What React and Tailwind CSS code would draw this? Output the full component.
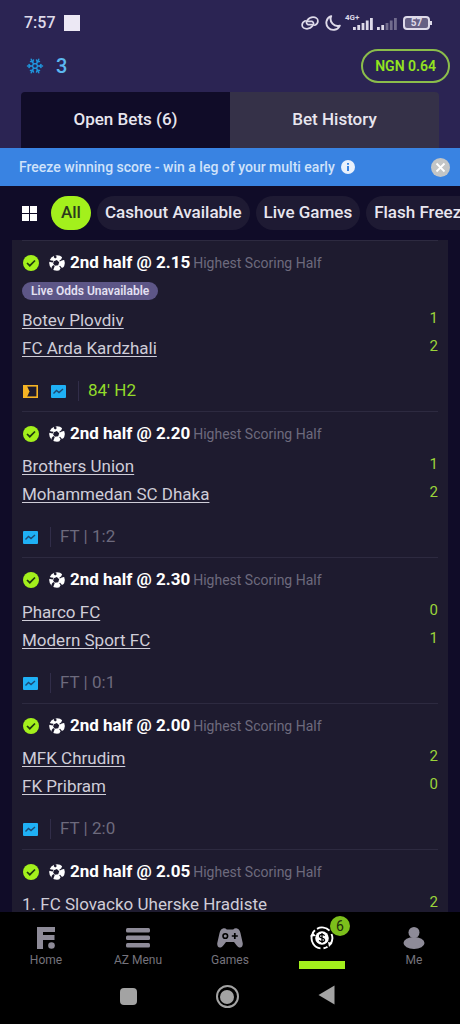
import { Snowflake } from 'lucide-react';

const FILTERS = ['All', 'Cashout Available', 'Live Games', 'Flash Freeze'];

const BETS = [
  { odds: '2.15', teams: ['Botev Plovdiv', 'FC Arda Kardzhali'], score: [1, 2], live: true, status: "84' H2" },
  { odds: '2.20', teams: ['Brothers Union', 'Mohammedan SC Dhaka'], score: [1, 2], status: 'FT | 1:2' },
  { odds: '2.30', teams: ['Pharco FC', 'Modern Sport FC'], score: [0, 1], status: 'FT | 0:1' },
  { odds: '2.00', teams: ['MFK Chrudim', 'FK Pribram'], score: [2, 0], status: 'FT | 2:0' },
  { odds: '2.05', teams: ['1. FC Slovacko Uherske Hradiste'], score: [2] },
];

function LinkIcon() {
  return (
    <svg width="18" height="14" viewBox="0 0 18 14" fill="none" stroke="currentColor" strokeWidth="1.7" strokeLinecap="round">
      <path d="M11.500 8.600H6.800a2.600 2.600 0 0 1-.6-4.200C7.600 2.400 9.500 1.200 12 1.200c2.600 0 4.900 1.400 4.900 3.700 0 2-1.300 3.500-3.200 4.300" />
      <path d="M6.500 5.400h4.700a2.600 2.600 0 0 1 .6 4.200C10.400 11.600 8.500 12.800 6 12.800c-2.600 0-4.900-1.400-4.900-3.700 0-2 1.300-3.500 3.200-4.300" />
    </svg>
  );
}

function MoonIcon() {
  return (
    <svg width="16" height="16" viewBox="0 0 16 16" fill="none" stroke="currentColor" strokeWidth="1.9" strokeLinejoin="round">
      <path d="M6.200 1.200a7 7 0 1 0 8.600 9.400A7 7 0 0 1 6.200 1.200z" />
    </svg>
  );
}

function Signal({ dim }) {
  return (
    <svg width="20" height="12" viewBox="0 0 20 12" fill="currentColor">
      <rect x="0" y="9" width="2.800" height="3" />
      <rect x="4.300" y="7" width="2.800" height="5" />
      <rect x="8.600" y="5" width="2.800" height="7" opacity={dim ? 0.4 : 1} />
      <rect x="12.800" y="2.500" width="2.800" height="9.500" opacity={dim ? 0.4 : 1} />
      <rect x="17" y="0" width="2.800" height="12" opacity={dim ? 0.4 : 1} />
    </svg>
  );
}

function CheckBadge() {
  return (
    <svg width="16" height="16" viewBox="0 0 16 16" className="shrink-0">
      <circle cx="8" cy="8" r="8" fill="#a3f01c" />
      <path d="M4 8l2.800 2.700 5.200-5.200" fill="none" stroke="#1e3a10" strokeWidth="1.700" />
    </svg>
  );
}

function Ball() {
  return (
    <svg width="16" height="16" viewBox="0 0 16 16" className="shrink-0">
      <circle cx="8" cy="8" r="7.800" fill="#fff" />
      <g fill="#1e1b2f">
        <path d="M4.800 6.200l3-1.200 2.400 2.200-1 3.100-3.400.4-1.700-2.200z" />
        <path d="M5 0l2.200.4.400 2.200-1.400 1L4.800 2.200z" />
        <path d="M0 4.800l2.300.8 2.200.2-.8 1.600L0 6.800z" />
        <path d="M2 15l.8-3.200 1.500-1.700 1.400 1.100-.9 2.200L4 15.500z" />
        <path d="M10 15.800l1.600-2.600-1.400-2 .9-.4 1.700 1.900 2.700-.3-1.500 2.800z" />
        <path d="M16 4.800l-3.200.6-2 1.200-.5-.8 2-1.600L13.500 1z" />
      </g>
    </svg>
  );
}

function StreamIcon() {
  return (
    <svg width="15" height="13" viewBox="0 0 15 13">
      <rect x="0.800" y="0.800" width="13.400" height="11.400" fill="none" stroke="#f5b324" strokeWidth="1.600" />
      <path d="M1 1h3l2.500 5.500L4 12H1z" fill="#f5b324" />
    </svg>
  );
}

function StatsIcon() {
  return (
    <svg width="15" height="13" viewBox="0 0 15 13">
      <rect width="15" height="13" rx="1" fill="#1fb0f5" />
      <path d="M2.500 8.500l3-3 2.500 2 4-3.500" fill="none" stroke="#1d4a73" strokeWidth="1.400" />
    </svg>
  );
}

function HomeLogo() {
  return (
    <svg width="18" height="22" viewBox="0 0 18 22" fill="currentColor">
      <path d="M0 0h18v5H6v3h11.500v5H6v9H0z" />
      <circle cx="14.500" cy="18.500" r="3.300" />
    </svg>
  );
}

function MenuIcon() {
  return (
    <svg width="24" height="20" viewBox="0 0 24 20" fill="currentColor">
      <rect width="24" height="4.500" rx="1.500" />
      <rect y="7.500" width="24" height="4.500" rx="1.500" />
      <rect y="15" width="24" height="4.500" rx="1.500" />
    </svg>
  );
}

function GamepadIcon() {
  return (
    <svg width="26" height="20" viewBox="0 0 26 20">
      <path
        d="M6 .5c1.500-.5 2.800 0 3.800 1h6.400c1-1 2.300-1.500 3.800-1 1.800.5 2.800 2 3.400 4.300L25.700 15c.4 2.500-.6 4.500-2.500 4.500-1.500 0-2.500-.8-3.700-2.300L17 14H9l-2.500 3.200C5.300 18.700 4.300 19.500 2.800 19.500.9 19.500-.1 17.500.3 15L2.600 4.800C3.200 2.500 4.200 1 6 .5z"
        fill="currentColor"
      />
      <circle cx="8.300" cy="8" r="2.300" fill="none" stroke="#000" strokeWidth="1.600" />
      <path d="M17.800 5v6M14.800 8h6" stroke="#000" strokeWidth="1.700" />
    </svg>
  );
}

function BetsIcon() {
  return (
    <svg width="24" height="24" viewBox="0 0 24 24" fill="none" stroke="#fff" strokeWidth="1.900">
      <path d="M10.500 22.400A10.500 10.500 0 0 1 2 9M7 2.800A10.500 10.500 0 0 1 19.500 4.700M21.500 8A10.500 10.500 0 0 1 20 18.700" />
      <path d="M0 10.500L2.500 6l3.500 4zM18 16l4.500 1-3.500 4z" fill="#fff" stroke="none" />
      <path d="M13.500 22.300a10.500 10.500 0 0 0 4-1.600M2.600 7.200A10.500 10.500 0 0 1 5 4.200" />
      <circle cx="12" cy="12" r="6.800" fill="#fff" stroke="none" />
      <path d="M14.600 9.800c-.4-.9-1.300-1.400-2.600-1.400-1.500 0-2.500.7-2.500 1.800 0 2.600 5.100 1.100 5.100 3.700 0 1.100-1.100 1.700-2.600 1.700-1.400 0-2.400-.5-2.700-1.500M12 7v10" stroke="#000" strokeWidth="1.300" />
    </svg>
  );
}

function MeIcon() {
  return (
    <svg width="22" height="22" viewBox="0 0 22 22" fill="currentColor">
      <circle cx="11" cy="5.500" r="5.500" />
      <ellipse cx="11" cy="16" rx="10.500" ry="6" />
    </svg>
  );
}

function Team({ name, score }) {
  return (
    <div className="flex h-7 items-start justify-between">
      <a href="#" className="text-[17px] leading-7 text-[#cfcdd8] underline underline-offset-2">
        {name}
      </a>
      <span className="text-[15px] leading-6 text-[#9bd43a]">{score}</span>
    </div>
  );
}

function Bet({ bet }) {
  return (
    <article className="border-t border-[#2d2a40] pt-2.5 pb-2">
      <div className="flex h-6 items-center whitespace-nowrap">
        <span className="pl-px">
          <CheckBadge />
        </span>
        <span className="ml-2.5">
          <Ball />
        </span>
        <h2 className="ml-[5px] text-[17px] font-bold text-white">2nd half @ {bet.odds}</h2>
        <span className="ml-[3px] text-sm text-[#6d6a7d]">Highest Scoring Half</span>
      </div>
      {bet.live && (
        <div className="mt-[7px] flex">
          <span className="h-[18px] rounded-full bg-[#5d5687] px-[9px] text-xs leading-[18px] font-semibold text-[#e4e1f2]">
            Live Odds Unavailable
          </span>
        </div>
      )}
      <div className="mt-1.5">
        {bet.teams.map((t, i) => (
          <Team key={t} name={t} score={bet.score[i]} />
        ))}
      </div>
      {bet.status && (
        <div className="mt-[17px] flex h-6 items-center pl-px">
          {bet.live && (
            <span className="mr-[13px]">
              <StreamIcon />
            </span>
          )}
          <StatsIcon />
          <span className="ml-3 h-5 w-px bg-[#312d49]" />
          <span className={`ml-[9px] text-[17px] ${bet.live ? 'text-[#93dc2a]' : 'text-[#6d6a7d]'}`}>{bet.status}</span>
        </div>
      )}
    </article>
  );
}

function NavItem({ label, children }) {
  return (
    <a href="#" className="flex flex-1 flex-col items-center text-[#8e8b98]">
      <span className="flex h-6 items-center">{children}</span>
      <span className="text-xs leading-5 text-[#75737c]">{label}</span>
    </a>
  );
}

export default function App() {
  return (
    <div className="flex h-screen flex-col overflow-hidden bg-[#100c28] font-[Roboto,sans-serif] text-white">
      <header className="bg-[#2b2453]">
        <div className="flex h-[46px] items-center justify-between pr-7 pl-6 text-[#dedae9]">
          <div className="flex items-center gap-2">
            <span className="text-base font-medium">7:57</span>
            <span className="size-4 bg-[#ece8f4]" />
          </div>
          <div className="flex items-center">
            <LinkIcon />
            <span className="ml-1.5">
              <MoonIcon />
            </span>
            <div className="relative ml-1 flex pt-0.5 pl-2">
              <span className="absolute -top-0.5 left-0 text-[8px] leading-none font-bold">4G+</span>
              <Signal />
            </div>
            <span className="ml-1 pt-0.5">
              <Signal dim />
            </span>
            <div className="ml-1.5 flex h-3.5 w-[27px] items-center justify-center rounded border-2 border-current bg-[#655f83] text-[10px] leading-none font-bold">
              57
            </div>
            <span className="h-1 w-0.5 bg-current" />
          </div>
        </div>
        <div className="flex h-10 items-center justify-between pr-2.5 pl-[26px]">
          <div className="flex items-center gap-3 text-[#5cb8f0]">
            <Snowflake size={18} className="text-[#1f95dc]" />
            <span className="text-xl font-medium">3</span>
          </div>
          <button className="h-[34px] rounded-full border-2 border-[#8bbd4b] px-3 text-sm font-semibold text-[#93e41f]">
            NGN 0.64
          </button>
        </div>
        <div className="mx-[21px] mt-1.5 flex">
          <button className="h-14 flex-1 rounded-tl bg-[#100c28] text-[17px] font-medium text-[#e8e6ef]">Open Bets (6)</button>
          <button className="h-14 flex-1 rounded-tr bg-[#353148] text-[17px] font-medium text-[#e8e6ef]">Bet History</button>
        </div>
      </header>

      <div className="flex h-[38px] shrink-0 items-center bg-[#3983e2] pr-2.5 pl-[19px]">
        <span className="text-sm font-medium text-[#cfe2fa]">Freeze winning score - win a leg of your multi early</span>
        <svg width="14" height="14" viewBox="0 0 14 14" className="ml-1.5">
          <circle cx="7" cy="7" r="7" fill="#e9f1fc" />
          <path d="M7 6v5M7 3v1.800" stroke="#3983e2" strokeWidth="2" />
        </svg>
        <button aria-label="Close" className="ml-auto flex size-[19px] items-center justify-center rounded-full bg-[#c3c5c6]">
          <svg width="11" height="11" viewBox="0 0 11 11">
            <path d="M1.500 1.500l8 8M9.500 1.500l-8 8" stroke="#fff" strokeWidth="1.800" />
          </svg>
        </button>
      </div>

      <div className="flex h-[54px] shrink-0 items-center overflow-hidden pl-[22px]">
        <button aria-label="All filters" className="mr-3.5 grid size-[15px] shrink-0 grid-cols-2 gap-px">
          <span className="bg-white" />
          <span className="bg-white" />
          <span className="bg-white" />
          <span className="bg-white" />
        </button>
        <div className="flex gap-1.5">
          {FILTERS.map((f, i) => (
            <button
              key={f}
              className={`h-[34px] shrink-0 rounded-full text-[17px] font-medium whitespace-nowrap ${
                i === 0 ? 'bg-[#a3f01c] px-2.5 text-[#2c3a1c]' : 'bg-[#1e1a33] px-2 text-[#e8e6ef]'
              }`}
            >
              {f}
            </button>
          ))}
        </div>
      </div>

      <main className="mx-3 min-h-0 flex-1 overflow-hidden bg-[#1e1b2f] px-2.5">
        {BETS.map((bet) => (
          <Bet key={bet.odds} bet={bet} />
        ))}
      </main>

      <footer className="shrink-0 bg-black">
        <nav className="flex h-[62px] pt-3.5">
          <NavItem label="Home">
            <HomeLogo />
          </NavItem>
          <NavItem label="AZ Menu">
            <MenuIcon />
          </NavItem>
          <NavItem label="Games">
            <GamepadIcon />
          </NavItem>
          <a href="#" aria-label="Open bets" className="flex flex-1 flex-col items-center">
            <span className="relative">
              <BetsIcon />
              <span className="absolute -top-2.5 left-5 size-5 rounded-full bg-[#7cbf1b] text-center text-sm leading-5 text-[#1d2b0c]">
                6
              </span>
            </span>
            <span className="mt-[11px] h-2 w-[46px] bg-[#a3f01c]" />
          </a>
          <NavItem label="Me">
            <MeIcon />
          </NavItem>
        </nav>
        <div className="flex h-[50px] items-start justify-center gap-[79px] pt-[11px] pr-1.5">
          <button aria-label="Recent apps" className="mt-[3px] size-[17px] rounded-sm bg-[#a3a3a3]" />
          <button aria-label="Home screen" className="flex size-[23px] items-center justify-center rounded-full border-2 border-[#a3a3a3]">
            <span className="size-3.5 rounded-full bg-[#a3a3a3]" />
          </button>
          <button aria-label="Back">
            <svg width="17" height="20" viewBox="0 0 17 20">
              <path d="M16.500.5v19L.5 10z" fill="#a3a3a3" />
            </svg>
          </button>
        </div>
      </footer>
    </div>
  );
}
